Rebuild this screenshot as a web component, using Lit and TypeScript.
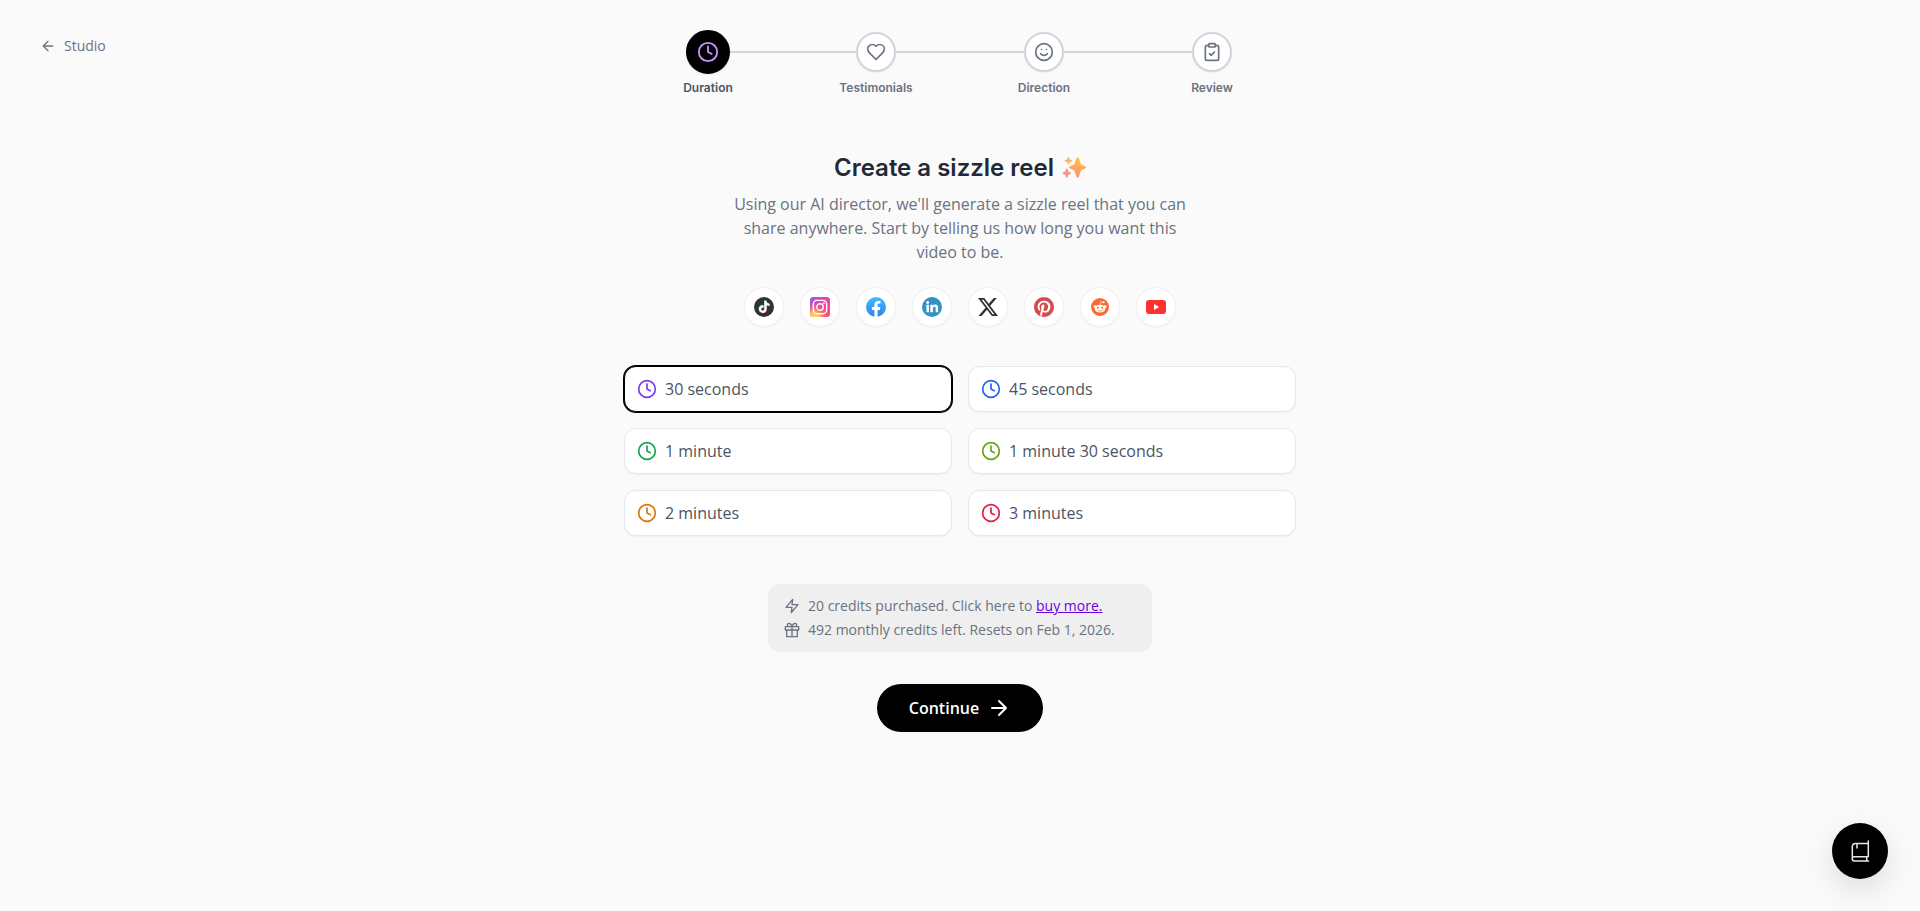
import { LitElement, html, css, svg } from "lit";
import { customElement, state } from "lit/decorators.js";
import { classMap } from "lit/directives/class-map.js";

const icon = (size: number, body: unknown, stroke = 2) => html`
  <svg width=${size} height=${size} viewBox="0 0 24 24" fill="none" stroke="currentColor"
    stroke-width=${stroke} stroke-linecap="round" stroke-linejoin="round" aria-hidden="true">${body}</svg>`;

const clock = svg`<circle cx="12" cy="12" r="10"/><path d="M12 6v6l4 2"/>`;
const heart = svg`<path d="M19 14c1.49-1.46 3-3.21 3-5.5A5.5 5.5 0 0 0 16.5 3c-1.76 0-3 .5-4.5 2-1.5-1.5-2.74-2-4.5-2A5.5 5.5 0 0 0 2 8.5c0 2.3 1.5 4.05 3 5.5l7 7Z"/>`;
const smile = svg`<circle cx="12" cy="12" r="10"/><path d="M8 14s1.5 2 4 2 4-2 4-2M9 9h.01M15 9h.01"/>`;
const clipboard = svg`<rect x="8" y="2" width="8" height="4" rx="1"/><path d="M16 4h2a2 2 0 0 1 2 2v14a2 2 0 0 1-2 2H6a2 2 0 0 1-2-2V6a2 2 0 0 1 2-2h2M9 14l2 2 4-4"/>`;
const arrowLeft = svg`<path d="m12 19-7-7 7-7M19 12H5"/>`;
const arrowRight = svg`<path d="M5 12h14M12 5l7 7-7 7"/>`;
const zap = svg`<path d="M13 2 3 14h9l-1 8 10-12h-9l1-8z"/>`;
const gift = svg`<path d="M20 12v10H4V12M2 7h20v5H2zM12 22V7M12 7H7.500a2.500 2.500 0 0 1 0-5C11 2 12 7 12 7zM12 7h4.500a2.500 2.500 0 0 0 0-5C13 2 12 7 12 7z"/>`;
const book = svg`<path d="M20.3 2v1.2c0 .8-.5 1.3-1.300 1.300H7.300a3 3 0 0 0-3 3v12.200M20.300 3v14.600M9 4.800v4.200M20 17.700H6.400a2.150 2.150 0 0 0 0 4.300H20.500M18.700 18v3.700"/>`;

const noteShape = "M12.525.02c1.31-.02 2.61-.01 3.91-.02.08 1.53.63 3.09 1.75 4.17 1.12 1.11 2.7 1.62 4.24 1.79v4.03c-1.44-.05-2.89-.35-4.2-.97-.57-.26-1.1-.59-1.62-.93-.01 2.92.01 5.84-.02 8.75-.08 1.4-.54 2.79-1.35 3.94-1.31 1.92-3.58 3.17-5.91 3.21-1.43.08-2.86-.31-4.08-1.03-2.02-1.19-3.44-3.37-3.65-5.71-.02-.5-.03-1-.01-1.49.18-1.9 1.12-3.72 2.58-4.96 1.66-1.44 3.98-2.13 6.15-1.72.02 1.48-.04 2.96-.04 4.44-.99-.32-2.15-.23-3.02.37-.63.41-1.11 1.04-1.36 1.75-.21.51-.15 1.07-.14 1.61.24 1.64 1.82 3.02 3.5 2.87 1.12-.01 2.19-.66 2.77-1.61.19-.33.4-.67.41-1.06.1-1.79.06-3.57.07-5.36.01-4.03-.01-8.05.02-12.07z";

const networks = [
  { name: "TikTok", art: svg`
    <circle cx="12" cy="12" r="12"/>
    <path transform="translate(4.6 4.200) scale(.6)" fill="#25f4ee" d=${noteShape}/>
    <path transform="translate(5.600 5) scale(.6)" fill="#fe2c55" d=${noteShape}/>
    <path transform="translate(5.100 4.600) scale(.6)" fill="#fff" d=${noteShape}/>` },
  { name: "Instagram", art: svg`
    <defs>
      <linearGradient id="ig-base" x1="0" y1="0" x2="1" y2="1"><stop stop-color="#7a2cf5"/><stop offset=".5" stop-color="#f0148c"/><stop offset="1" stop-color="#ff1f5a"/></linearGradient>
      <radialGradient id="ig-glow" cx=".2" cy="1.05" r=".75"><stop stop-color="#ffd940"/><stop offset=".35" stop-color="#ffb22e"/><stop offset="1" stop-color="#ff3a3a" stop-opacity="0"/></radialGradient>
    </defs>
    <rect width="24" height="24" rx="4" fill="url(#ig-base)"/><rect width="24" height="24" rx="4" fill="url(#ig-glow)"/>
    <rect x="4" y="4" width="16" height="16" rx="4.500" fill="none" stroke="#fff" stroke-width="1.700"/>
    <circle cx="12" cy="12" r="3.900" fill="none" stroke="#fff" stroke-width="1.700"/><circle cx="16.700" cy="7.300" r="1.100" fill="#fff"/>` },
  { name: "Facebook", art: svg`
    <defs><linearGradient id="fb" x1="0" y1="0" x2="0" y2="1"><stop stop-color="#18acfe"/><stop offset="1" stop-color="#0163e0"/></linearGradient></defs>
    <circle cx="12" cy="12" r="12" fill="url(#fb)"/>
    <path fill="#fff" d="M16.671 15.469L17.203 12h-3.328V9.75c0-.949.465-1.875 1.956-1.875h1.513V4.922s-1.374-.235-2.686-.235c-2.741 0-4.533 1.662-4.533 4.669V12H7.078v3.469h3.047v8.385a12.100 12.100 0 0 0 3.750 0v-8.385h2.796z"/>` },
  { name: "LinkedIn", art: svg`
    <circle cx="12" cy="12" r="12" fill="#0077b5"/>
    <g fill="#fff"><circle cx="6.800" cy="6.600" r="1.700"/><path d="M5.300 9.400h3v8.800h-3zM10 9.400h2.900v1.300c.6-1 1.600-1.600 3-1.600 2.600 0 3.500 1.600 3.500 4v5.100h-3v-4.600c0-1.200-.3-2-1.500-2s-1.800.8-1.800 2v4.600H10z"/></g>` },
  { name: "X", art: svg`<path d="M18.900 1.200h3.700l-8 9.200L24 22.800h-7.400l-5.800-7.600-6.600 7.600H.5l8.600-9.800L0 1.200h7.600l5.200 6.900zm-1.300 19.400h2L6.500 3.200H4.300z"/>` },
  { name: "Pinterest", art: svg`
    <circle cx="12" cy="12" r="11.500" fill="#fff"/>
    <path fill="#cb1f27" d="M12.017 0C5.396 0 .029 5.367.029 11.987c0 5.079 3.158 9.417 7.618 11.162-.105-.949-.199-2.403.041-3.439.219-.937 1.406-5.957 1.406-5.957s-.359-.72-.359-1.781c0-1.663.967-2.911 2.168-2.911 1.024 0 1.518.769 1.518 1.688 0 1.029-.653 2.567-.992 3.992-.285 1.193.6 2.165 1.775 2.165 2.128 0 3.768-2.245 3.768-5.487 0-2.861-2.063-4.869-5.008-4.869-3.410 0-5.409 2.562-5.409 5.199 0 1.033.394 2.143.889 2.741.099.12.112.225.085.345-.09.375-.293 1.199-.334 1.363-.053.225-.172.271-.401.165-1.495-.69-2.433-2.878-2.433-4.646 0-3.776 2.748-7.252 7.920-7.252 4.158 0 7.392 2.967 7.392 6.923 0 4.135-2.607 7.462-6.233 7.462-1.214 0-2.354-.629-2.758-1.379l-.749 2.848c-.269 1.045-1.004 2.352-1.498 3.146 1.123.345 2.306.535 3.550.535 6.607 0 11.985-5.365 11.985-11.987C23.970 5.390 18.592.026 11.985.026z"/>` },
  { name: "Reddit", art: svg`
    <circle cx="12" cy="12" r="10.800" fill="#ff4500"/>
    <g fill="#fff"><ellipse cx="12" cy="14" rx="6.400" ry="4.600"/><circle cx="6" cy="11.600" r="1.700"/><circle cx="18" cy="11.600" r="1.700"/><circle cx="16.200" cy="6.300" r="1.300"/></g>
    <path d="M12 9.800l1-4 3 .6" fill="none" stroke="#fff" stroke-width=".8"/>
    <g fill="#ff4500"><circle cx="9.500" cy="12.900" r="1.250"/><circle cx="14.500" cy="12.900" r="1.250"/></g>
    <path d="M9.400 16.100c1.500 1.200 3.700 1.200 5.200 0" fill="none" stroke="#ff4500" stroke-width=".9" stroke-linecap="round"/>` },
  { name: "YouTube", art: svg`<rect y="3.600" width="24" height="16.800" rx="3.600" fill="#f00"/><path fill="#fff" d="M9.600 8.500 15.800 12l-6.200 3.500z"/>` },
];

const steps = [
  { label: "Duration", glyph: clock },
  { label: "Testimonials", glyph: heart },
  { label: "Direction", glyph: smile },
  { label: "Review", glyph: clipboard },
];

const durations = [
  { label: "30 seconds", tone: "violet" },
  { label: "45 seconds", tone: "blue" },
  { label: "1 minute", tone: "green" },
  { label: "1 minute 30 seconds", tone: "lime" },
  { label: "2 minutes", tone: "amber" },
  { label: "3 minutes", tone: "rose" },
];

@customElement("step-nav")
export class StepNav extends LitElement {
  static styles = css`
    :host { display: block; }
    svg { display: block; }
    .steps { display: grid; grid-template-columns: repeat(4, 1fr); margin: 0; padding: 0; list-style: none; }
    .step { display: flex; flex-direction: column; gap: 8px; color: #6b7280; }
    .rail { display: flex; align-items: center; }
    .rail::before, .rail::after { content: ""; flex: 1; height: 2px; background: #d1d5db; }
    .step:first-child .rail::before, .step:last-child .rail::after { background: none; }
    .dot {
      box-sizing: border-box; width: 40px; height: 40px; border: 2px solid #d1d5db; border-radius: 50%;
      background: #fff; display: grid; place-items: center; box-shadow: 0 1px 2px rgb(0 0 0 / 5%);
    }
    .label { font: 600 12px/16px Inter, Arial, sans-serif; text-align: center; }
    .active { color: #4b5563; }
    .active .dot { background: #000; border-color: #000; color: #c792ff; transform: scale(1.1); }
  `;
  render() {
    return html`<ol class="steps">
      ${steps.map((s, i) => html`
        <li class=${classMap({ step: true, active: i === 0 })} aria-current=${i === 0 ? "step" : "false"}>
          <div class="rail"><span class="dot">${icon(20, s.glyph)}</span></div>
          <span class="label">${s.label}</span>
        </li>`)}
    </ol>`;
  }
}

@customElement("app-root")
export class AppRoot extends LitElement {
  @state() private selected = 0;

  static styles = css`
    :host {
      display: block; min-height: 100vh; background: #fafafa; color: #6b7280;
      font: 400 16px/24px "Open Sans", "Noto Sans", sans-serif;
    }
    svg { display: block; flex: none; }
    .page {
      display: grid; grid-template-columns: 1fr minmax(0, 672px) 1fr; padding: 32px 40px;
    }
    .back {
      justify-self: start; align-self: start; display: flex; align-items: center; gap: 8px;
      padding: 4px 0; font-size: 14px; line-height: 20px; color: inherit; text-decoration: none;
    }
    .main { display: flex; flex-direction: column; align-items: center; }
    step-nav { width: 100%; }
    .intro { max-width: 464px; margin-top: 56px; text-align: center; }
    .title {
      display: flex; justify-content: center; align-items: center; gap: 8px; margin: 0 0 8px;
      color: #1f2937; font: 600 24px/32px Inter, Arial, sans-serif;
    }
    .text { margin: 0; }
    .networks { display: flex; gap: 18px; margin: 24px 0 40px; padding: 0; list-style: none; }
    .network {
      box-sizing: border-box; width: 38px; height: 38px; border-radius: 50%;
      background: #fff; display: grid; place-items: center; box-shadow: 0 0 0 1px #f1f1f3, 0 1px 3px rgb(0 0 0 / 8%);
    }
    .network svg { opacity: 0.8; }
    .options {
      width: 100%; display: grid; grid-template-columns: 1fr 1fr; gap: 16px;
      margin: 0; padding: 0; border: 0; min-width: 0;
    }
    .option {
      position: relative; display: flex; align-items: center; gap: 8px; padding: 10px 12px;
      border: 1px solid #e5e7eb; border-radius: 12px; background: #fff; color: #4b5563;
      box-shadow: 0 1px 2px rgb(0 0 0 / 5%); cursor: pointer;
    }
    .chosen { border-color: #000; box-shadow: 0 0 0 1px #000; }
    .radio { position: absolute; inset: 0; margin: 0; opacity: 0; cursor: pointer; }
    .violet { color: #7c3aed; }
    .blue { color: #2563eb; }
    .green { color: #16a34a; }
    .lime { color: #65a30d; }
    .amber { color: #d97706; }
    .rose { color: #e11d48; }
    .credits {
      box-sizing: border-box; width: 100%; max-width: 384px; margin: 48px 0 32px; padding: 10px 16px;
      border-radius: 12px; background: #efefef; font-size: 14px;
    }
    .credit { display: flex; align-items: center; gap: 8px; margin: 0; }
    .more { color: #6d00e0; }
    .continue {
      display: flex; align-items: center; gap: 8px; padding: 12px 32px; border: 0; border-radius: 24px;
      background: #000; color: #fff; font: inherit; font-weight: 600; cursor: pointer;
    }
    .help {
      position: fixed; right: 32px; bottom: 32px; width: 56px; height: 56px; padding: 0; border: 0;
      border-radius: 50%; background: #000; color: #e5e7eb; display: grid; place-items: center;
      box-shadow: 0 10px 30px rgb(0 0 0 / 12%); cursor: pointer;
    }
  `;

  render() {
    return html`
      <div class="page">
        <nav><a class="back" href="#studio">${icon(16, arrowLeft)}Studio</a></nav>
        <main class="main">
          <step-nav></step-nav>
          <header class="intro">
            <h1 class="title">
              Create a sizzle reel
              <svg width="24" height="24" viewBox="0 0 24 24" aria-hidden="true">
                <defs><linearGradient id="spark" x1=".7" y1="0" x2=".3" y2="1"><stop stop-color="#ffc83d"/><stop offset="1" stop-color="#ff8a78"/></linearGradient></defs>
                <path fill="url(#spark)" d="M14.500 2.200c.5-1.200 1.800-1.200 2.300 0l2 5.500c.2.600.6 1 1.200 1.200l3.300 1.300c1 .5 1 1.800 0 2.300L20 13.800c-.6.200-1 .6-1.200 1.200l-2 5.700c-.5 1.300-1.800 1.300-2.300 0l-2-5.700c-.2-.6-.6-1-1.200-1.200L8 12.500c-1-.5-1-1.800 0-2.300l3.300-1.300c.6-.2 1-.6 1.200-1.200z"/>
                <path fill="#ffb35c" d="M5.800 1.500c.2-.7 1-.7 1.200 0l.7 1.900 1.900.7c.7.3.7 1 0 1.300l-1.900.7L7 8c-.2.700-1 .7-1.200 0l-.7-1.900-1.900-.7c-.7-.3-.7-1 0-1.300l1.900-.7z"/>
                <path fill="#ff8f80" d="M4 13.200c.3-.8 1.200-.8 1.500 0l.8 2.300 2.100.9c.8.3.8 1.200 0 1.500l-2.100.8-.8 2.500c-.3.8-1.200.8-1.500 0l-.8-2.500-2.100-.8c-.8-.3-.8-1.200 0-1.500l2.100-.9z"/>
              </svg>
            </h1>
            <p class="text">Using our AI director, we'll generate a sizzle reel that you can share anywhere. Start by telling us how long you want this video to be.</p>
          </header>
          <ul class="networks">
            ${networks.map((n) => html`
              <li class="network"><svg width="20" height="20" viewBox="0 0 24 24" role="img" aria-label=${n.name}>${n.art}</svg></li>`)}
          </ul>
          <fieldset class="options" aria-label="Video duration">
            ${durations.map((d, i) => html`
              <label class=${classMap({ option: true, chosen: i === this.selected })}>
                <input class="radio" type="radio" name="duration" .checked=${i === this.selected}
                  @change=${() => (this.selected = i)} />
                <span class=${d.tone}>${icon(20, clock)}</span>${d.label}
              </label>`)}
          </fieldset>
          <section class="credits">
            <p class="credit">${icon(16, zap)}<span>20 credits purchased. Click here to <a class="more" href="#credits">buy more.</a></span></p>
            <p class="credit">${icon(16, gift)}<span>492 monthly credits left. Resets on Feb 1, 2026.</span></p>
          </section>
          <button class="continue" type="button">Continue${icon(24, arrowRight)}</button>
        </main>
      </div>
      <button class="help" type="button" aria-label="Guide">${icon(24, book, 1.5)}</button>
    `;
  }
}
